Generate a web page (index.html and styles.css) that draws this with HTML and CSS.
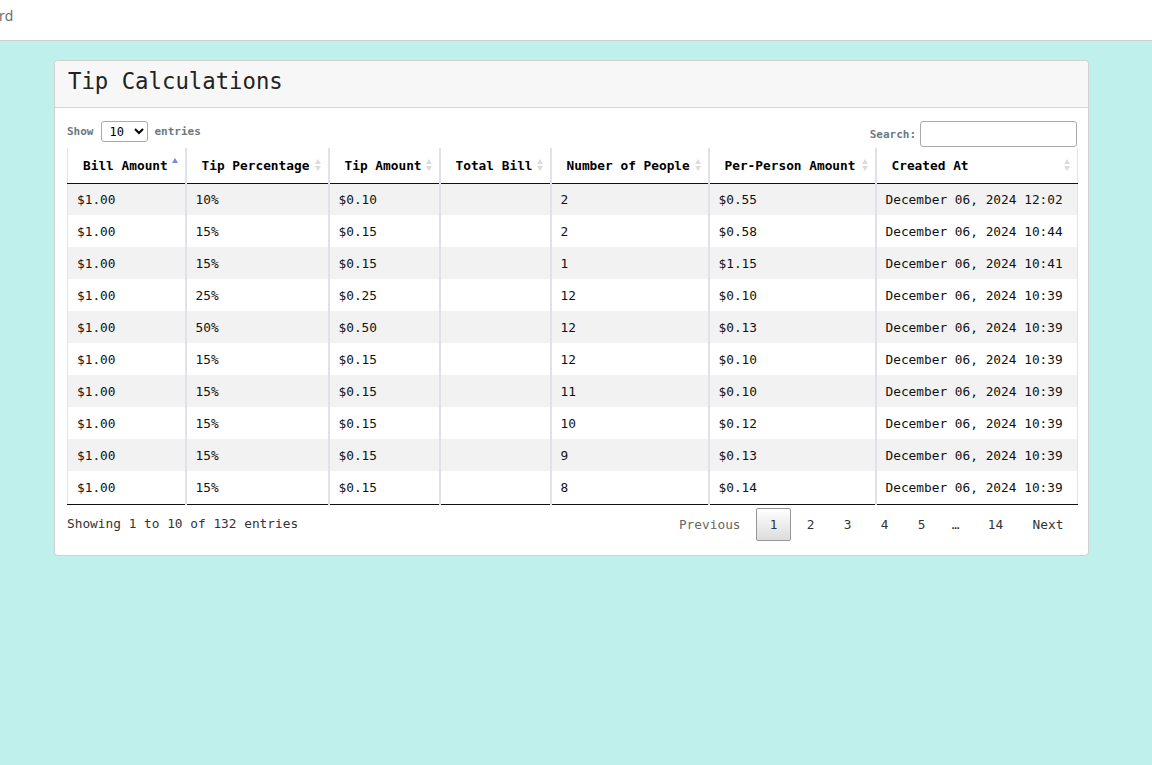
FILE: index.html
```html
<!DOCTYPE html>
<html>
<head>
<meta charset="utf-8">
<link rel="stylesheet" href="styles.css">
</head>
<body>
<div class="topbar"><span class="brand">rd</span></div>
<main class="page">
  <section class="card">
    <header class="card-header"><h1>Tip Calculations</h1></header>
    <div class="card-body">
      <div class="controls">
        <label class="length">Show <select><option>10</option><option>25</option><option>50</option></select> entries</label>
        <label class="search">Search: <input type="text"></label>
      </div>
      <table class="grid">
        <colgroup>
          <col style="width:118px"><col style="width:143px"><col style="width:111px"><col style="width:111px"><col style="width:158px"><col style="width:167px"><col style="width:202px">
        </colgroup>
        <thead>
          <tr>
            <th><div class="th"><span>Bill Amount</span><span class="sort asc"><i class="up"></i><i class="down"></i></span></div></th>
            <th><div class="th"><span>Tip Percentage</span><span class="sort"><i class="up"></i><i class="down"></i></span></div></th>
            <th><div class="th"><span>Tip Amount</span><span class="sort"><i class="up"></i><i class="down"></i></span></div></th>
            <th><div class="th"><span>Total Bill</span><span class="sort"><i class="up"></i><i class="down"></i></span></div></th>
            <th><div class="th"><span>Number of People</span><span class="sort"><i class="up"></i><i class="down"></i></span></div></th>
            <th><div class="th"><span>Per-Person Amount</span><span class="sort"><i class="up"></i><i class="down"></i></span></div></th>
            <th><div class="th"><span>Created At</span><span class="sort"><i class="up"></i><i class="down"></i></span></div></th>
          </tr>
        </thead>
        <tbody>
          <tr><td>$1.00</td><td>10%</td><td>$0.10</td><td></td><td>2</td><td>$0.55</td><td>December 06, 2024 12:02</td></tr>
          <tr><td>$1.00</td><td>15%</td><td>$0.15</td><td></td><td>2</td><td>$0.58</td><td>December 06, 2024 10:44</td></tr>
          <tr><td>$1.00</td><td>15%</td><td>$0.15</td><td></td><td>1</td><td>$1.15</td><td>December 06, 2024 10:41</td></tr>
          <tr><td>$1.00</td><td>25%</td><td>$0.25</td><td></td><td>12</td><td>$0.10</td><td>December 06, 2024 10:39</td></tr>
          <tr><td>$1.00</td><td>50%</td><td>$0.50</td><td></td><td>12</td><td>$0.13</td><td>December 06, 2024 10:39</td></tr>
          <tr><td>$1.00</td><td>15%</td><td>$0.15</td><td></td><td>12</td><td>$0.10</td><td>December 06, 2024 10:39</td></tr>
          <tr><td>$1.00</td><td>15%</td><td>$0.15</td><td></td><td>11</td><td>$0.10</td><td>December 06, 2024 10:39</td></tr>
          <tr><td>$1.00</td><td>15%</td><td>$0.15</td><td></td><td>10</td><td>$0.12</td><td>December 06, 2024 10:39</td></tr>
          <tr><td>$1.00</td><td>15%</td><td>$0.15</td><td></td><td>9</td><td>$0.13</td><td>December 06, 2024 10:39</td></tr>
          <tr><td>$1.00</td><td>15%</td><td>$0.15</td><td></td><td>8</td><td>$0.14</td><td>December 06, 2024 10:39</td></tr>
        </tbody>
      </table>
      <div class="footer">
        <div class="info">Showing 1 to 10 of 132 entries</div>
        <nav class="pager">
          <a class="btn disabled">Previous</a>
          <a class="btn current">1</a>
          <a class="btn">2</a>
          <a class="btn">3</a>
          <a class="btn">4</a>
          <a class="btn">5</a>
          <span class="ellipsis">…</span>
          <a class="btn">14</a>
          <a class="btn">Next</a>
        </nav>
      </div>
    </div>
  </section>
</main>
</body>
</html>
```

FILE: styles.css
```css
* { box-sizing: border-box; }
html, body { margin: 0; padding: 0; }
body {
  background: #bff0eb;
  font-family: "DejaVu Sans Mono", monospace;
  color: #000;
  height: 765px;
  overflow: hidden;
}
.topbar {
  height: 41px;
  background: #fff;
  border-bottom: 1px solid #cfcfcf;
  display: flex;
  align-items: flex-start;
}
.brand {
  font-family: "Open Sans", sans-serif;
  font-size: 14px;
  color: #666;
  line-height: 20px;
  padding-top: 6px;
  margin-left: -1px;
}
.page {
  padding: 19px 63px 0 54px;
}
.card {
  width: 1035px;
  background: #fff;
  border: 1px solid #d0d0d0;
  border-radius: 4px;
  overflow: hidden;
}
.card-header {
  height: 47px;
  background: #f7f7f7;
  border-bottom: 1px solid #d6d6d6;
  display: flex;
  align-items: center;
  padding: 0 0 5px 13px;
}
.card-header h1 {
  margin: 0;
  font-size: 22.3px;
  font-weight: normal;
  color: #222;
  line-height: 1.2;
}
.card-body {
  padding: 13px 11px 14px 12px;
}
.controls {
  display: flex;
  justify-content: space-between;
  align-items: flex-start;
  height: 27px;
}
.length, .search {
  font-size: 11px;
  font-weight: bold;
  color: #6a7a84;
  display: flex;
  align-items: center;
}
.length { height: 21px; }
.length select {
  margin: 0 7px 0 7px;
  width: 47px;
  height: 21px;
  font-family: "DejaVu Sans Mono", monospace;
  font-size: 12px;
  border: 1px solid #aaa;
  border-radius: 3px;
  background: #fff;
  color: #000;
  padding: 0 0 0 4px;
}
.search { height: 26px; }
.search input {
  margin-left: 4px;
  width: 157px;
  height: 26px;
  border: 1px solid #aaa;
  border-radius: 3px;
  font-family: "DejaVu Sans Mono", monospace;
  padding: 3px;
}
.grid {
  width: 1010px;
  border-collapse: collapse;
  table-layout: fixed;
  font-size: 12.8px;
  border-left: 1px solid #e2e5e8;
  border-right: 1px solid #e2e5e8;
}
.grid th {
  height: 35px;
  padding: 0 7px 0 15px;
  font-weight: bold;
  text-align: left;
  border-bottom: 1px solid #111;
  border-right: 2px solid #dfe2e6;
  white-space: nowrap;
}
.grid th:last-child, .grid td:last-child { border-right: none; }
.th {
  display: flex;
  justify-content: space-between;
  align-items: center;
}
.sort {
  display: flex;
  flex-direction: column;
  gap: 2px;
  margin-top: -1px;
}
.sort i {
  display: block;
  width: 0;
  height: 0;
  border-left: 3.5px solid transparent;
  border-right: 3.5px solid transparent;
}
.sort .up { border-bottom: 5px solid #dcdcdc; }
.sort .down { border-top: 5px solid #dcdcdc; }
.sort.asc { margin-top: -3px; }
.sort.asc .up { border-bottom-color: #7f86e0; }
.sort.asc .down { visibility: hidden; }
.grid td {
  height: 32px;
  padding: 0 9px;
  border-right: 2px solid #dfe2e6;
  color: #111;
  white-space: nowrap;
}
.grid tbody tr:nth-child(odd) td { background: #f2f2f2; }
.grid tbody tr:last-child td { border-bottom: 1px solid #111; height: 33px; }
.footer {
  display: flex;
  justify-content: space-between;
  align-items: flex-start;
  width: 1010px;
}
.info {
  padding-top: 9px;
  font-size: 12.8px;
  line-height: 19px;
  color: #333;
}
.pager {
  display: flex;
  align-items: center;
  padding-top: 3px;
  font-size: 12.8px;
}
.btn {
  display: block;
  margin-left: 2px;
  padding: 6.4px 12.65px;
  line-height: 19.2px;
  border: 1px solid transparent;
  border-radius: 2px;
  color: #333;
}
.btn.disabled { color: #666; }
.btn.current {
  border: 1px solid #979797;
  background: linear-gradient(to bottom, #fff 0%, #dcdcdc 100%);
}
.ellipsis {
  padding: 0 12.65px;
  color: #333;
}
```
